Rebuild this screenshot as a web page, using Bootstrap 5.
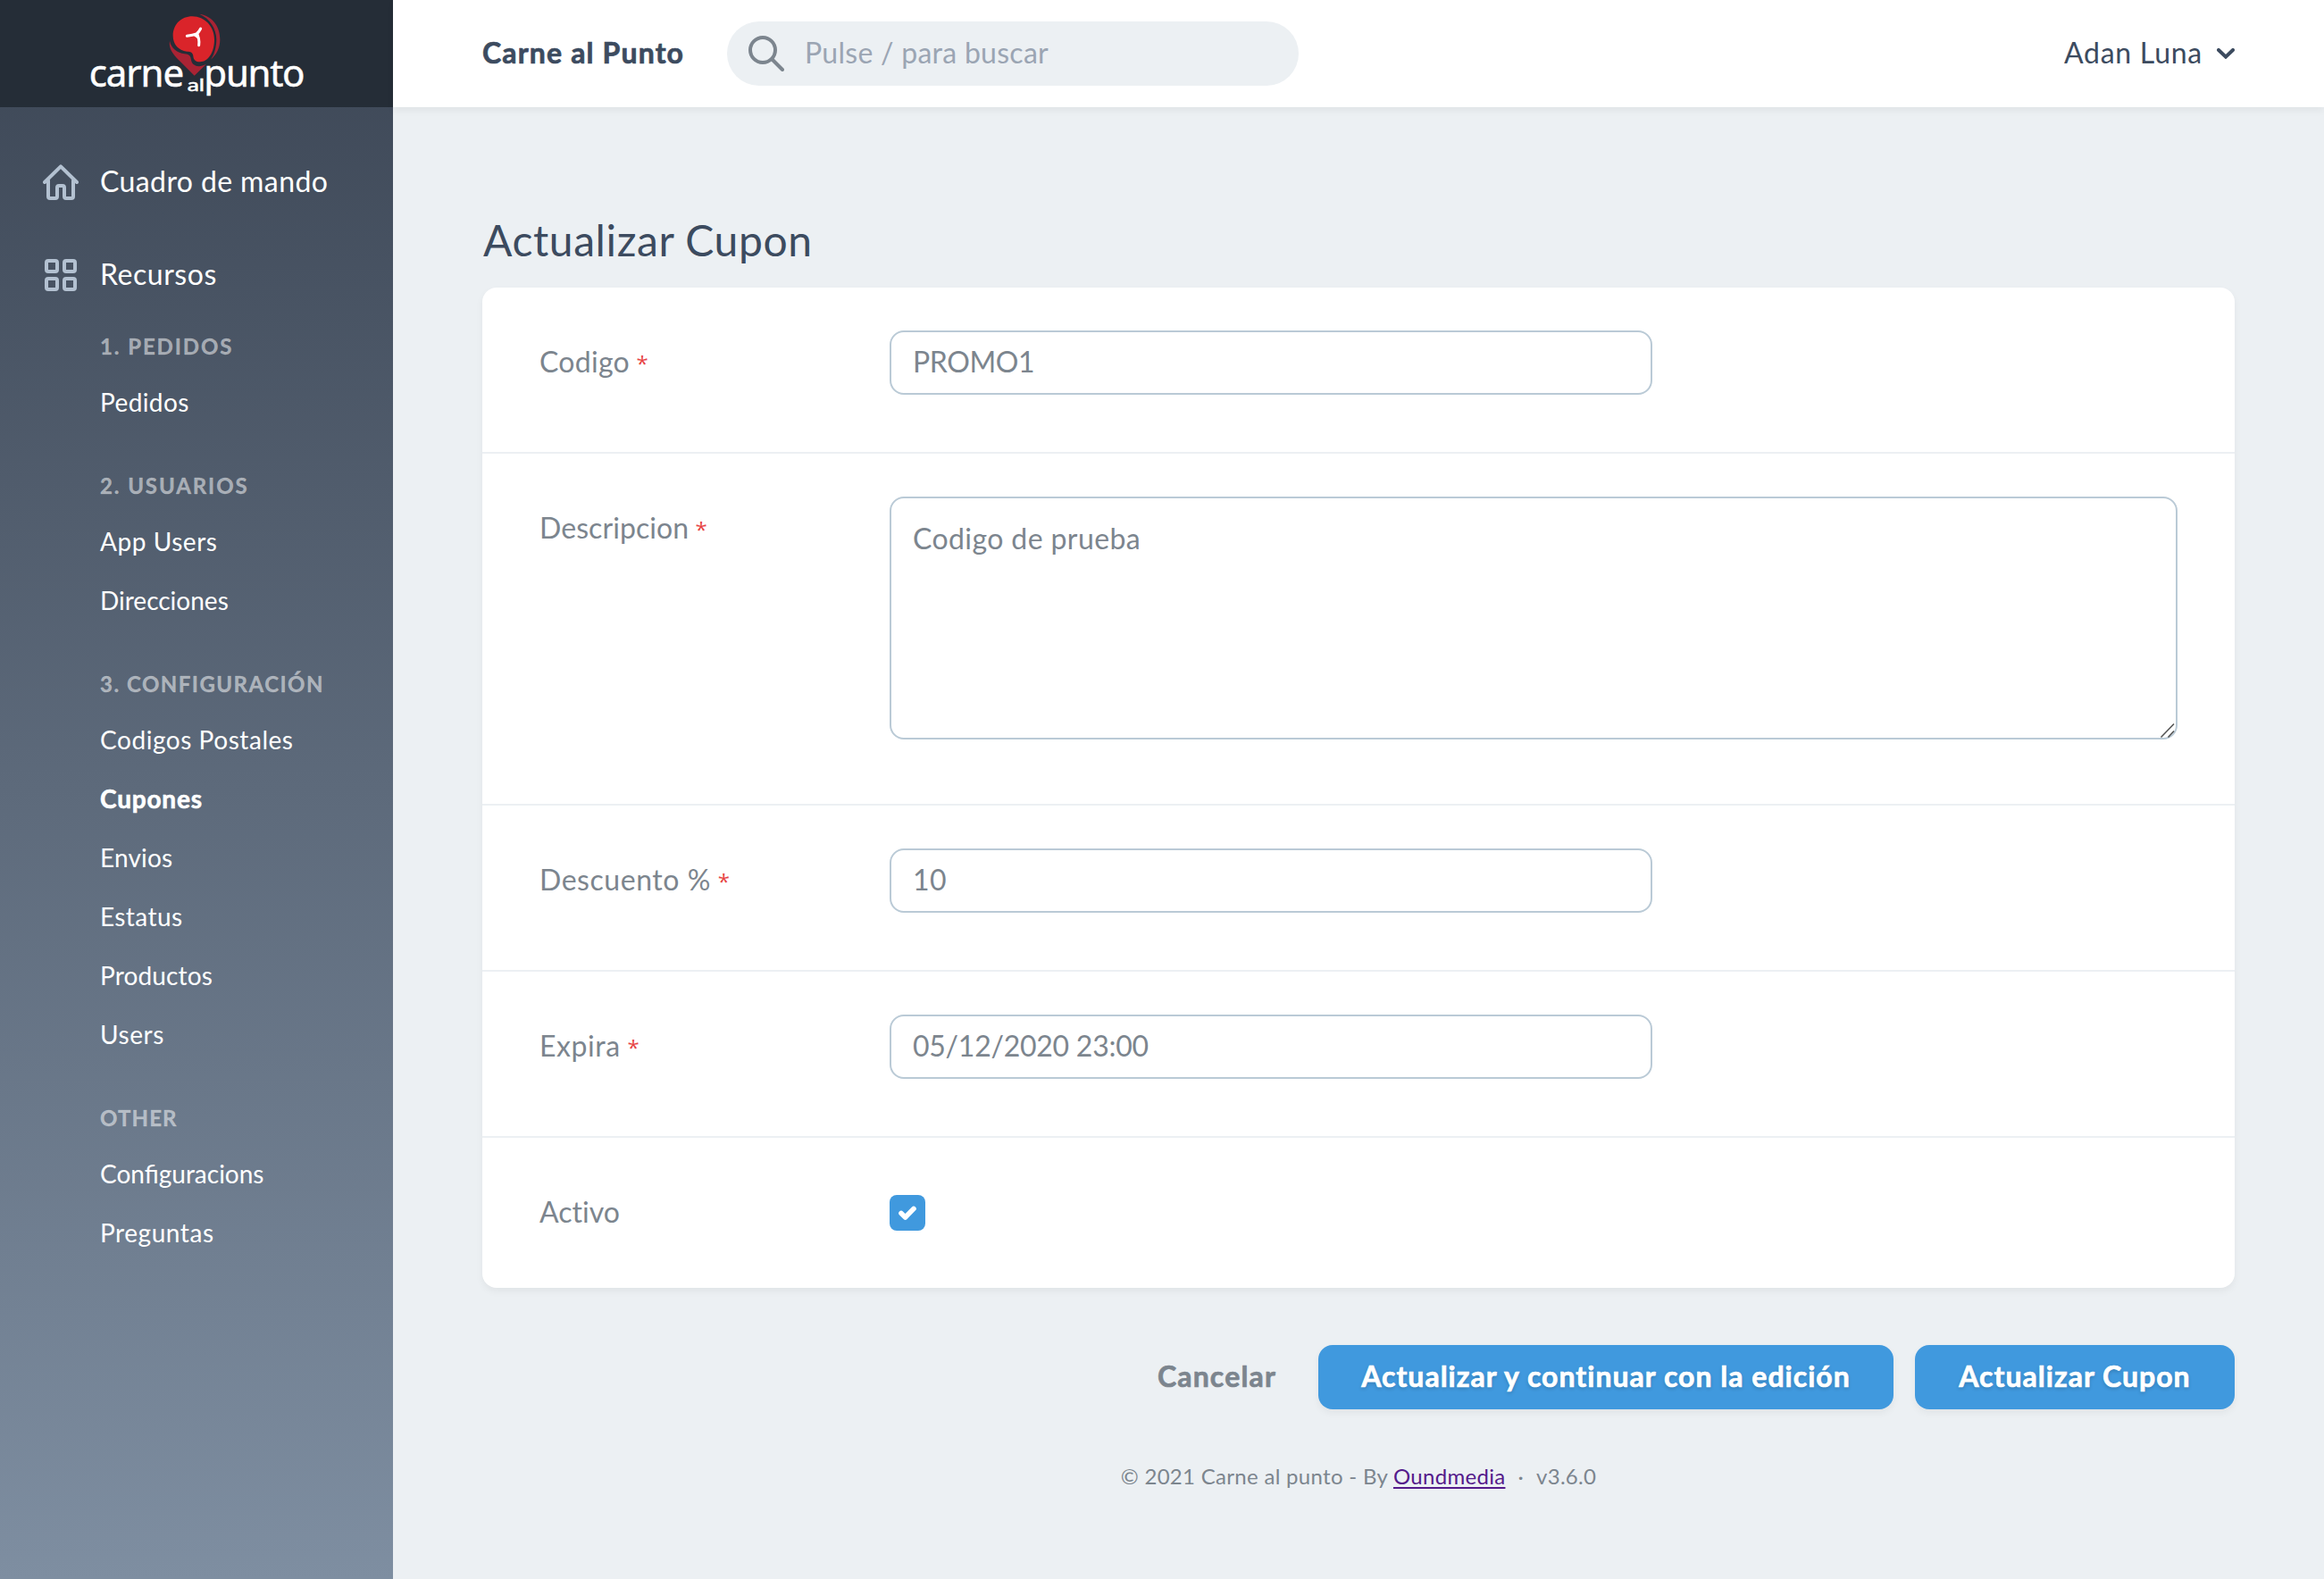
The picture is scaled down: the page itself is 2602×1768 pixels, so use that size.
<!DOCTYPE html>
<html lang="es">
<head>
<meta charset="utf-8">
<meta name="viewport" content="width=device-width, initial-scale=1">
<title>Actualizar Cupon - Carne al Punto</title>
<link href="https://cdn.jsdelivr.net/npm/bootstrap@5.3.0/dist/css/bootstrap.min.css" rel="stylesheet">
<style>
  body { font-family: Lato, "Open Sans", sans-serif; font-size: 32px; line-height: 48px; letter-spacing: .4px; color: #7c858e; background: #ecf0f3; }
  .side { width: 440px; min-height: 1768px; background: linear-gradient(0deg, #7e8ea1, #3c4655); color: #fff; }
  .brand { height: 120px; background: #252d37; }
  .side-menu { padding: 60px 0 0 48px; }
  .side-main { height: 48px; margin-bottom: 56px; gap: 24px; }
  .side-main svg { width: 40px; height: 40px; flex: none; }
  .side-main span { margin-top: -3px; }
  .side-sub { padding-left: 64px; margin-top: -18.4px; }
  .side-sub h2 { font-size: 24px; line-height: 36px; font-weight: 700; letter-spacing: 1.9px; color: rgba(255,255,255,.5); -webkit-text-stroke: .4px rgba(255,255,255,.35); margin: 0 0 11.5px; }
  .side-sub ul { margin: 0 0 42.5px; font-size: 28px; line-height: 66px; }
  .side-sub a, .side-main { color: #fff; text-decoration: none; }
  .side-sub .active { font-weight: 700; letter-spacing: .8px; -webkit-text-stroke: .6px #fff; }
  .ls-0 { letter-spacing: 0; } .ls-1 { letter-spacing: .15px; } .ls-2 { letter-spacing: .08px; } .ls-3 { letter-spacing: .28px; } .ls-6 { letter-spacing: .55px; } .ls-8 { letter-spacing: .75px; }
  .no-liga { font-variant-ligatures: none; }
  .side-sub h2.ls-conf { letter-spacing: 1.48px; } .side-sub h2.ls-other { letter-spacing: 1.15px; }
  .topbar { height: 120px; background: #fff; padding: 0 100px; box-shadow: 0 4px 8px rgba(0,0,0,.05); color: #3c4b5f; }
  .topbar .label-up { padding-bottom: 2.5px; }
  .topbar strong { letter-spacing: 1.15px; width: 274px; font-weight: 700; -webkit-text-stroke: .7px #3c4b5f; }
  .search { width: 640px; height: 72px; border-radius: 36px; background: #ecf0f3; padding-left: 24px; gap: 23px; }
  .search svg { width: 40px; height: 40px; flex: none; }
  .search input { flex: 1; min-width: 0; border: 0; outline: 0; background: none; padding: 0 0 2.5px; letter-spacing: .27px; }
  .search input::placeholder { color: #9ba5b3; opacity: 1; }
  .content { padding: 119px 100px 0; }
  .content h1 { font-size: 48px; line-height: 60px; font-weight: 400; letter-spacing: .6px; color: #3c4b5f; margin: 0 0 26px; padding: 0 0 0 1px; height: 57px; }
  .panel { background: #fff; border-radius: 16px; box-shadow: 0 4px 8px rgba(0,0,0,.05); }
  .field { border-bottom: 2px solid #ecf0f3; height: 186px; }
  .field-tall { height: 394px; }
  .field:last-child { border: 0; height: 168px; }
  .field > label { width: 456px; padding: 58.6px 0 0 64px; flex: none; }
  .req { color: #e74444; font-family: "Open Sans", sans-serif; font-size: 24px; line-height: 1; margin-left: -1px; position: relative; top: -1px; letter-spacing: 0; }
  .field .form-control { width: 854px; height: 72px; margin-top: 48px; border: 2px solid #bacad6; border-radius: 16px; padding: 0 24px 2.5px; font-size: 32px; line-height: 48px; color: #7c858e; letter-spacing: .4px; background: #fff; }
  .field .form-control.code-value { letter-spacing: -.4px; }
  .field .form-control.date-value { letter-spacing: -.25px; }
  .area-box { margin-top: 48px; width: 1442px; height: 272px; }
  .field textarea.form-control { width: 100%; height: 272px; margin: 0; padding: 20.5px 24px; resize: none; display: block; }
  .grip { position: absolute; right: 0; bottom: 0; width: 24px; height: 24px; }
  .tick { width: 40px; height: 40px; margin-top: 64px; border-radius: 8px; background: #4099de; }
  .tick svg { display: block; width: 40px; height: 40px; }
  .actions { margin-top: 64px; gap: 24px; font-weight: 700; }
  .actions a { color: #7c858e; text-decoration: none; margin-right: 23px; padding-bottom: 3px; letter-spacing: 1.16px; -webkit-text-stroke: .7px #7c858e; }
  .actions .btn { height: 72px; border: 0; border-radius: 16px; background: #4099de; color: #fff; font-size: 32px; font-weight: 700; line-height: 48px; letter-spacing: 1.02px; padding: 0 0 3px; box-shadow: 0 4px 8px rgba(0,0,0,.05); text-shadow: 0 2px 4px rgba(0,0,0,.2); -webkit-text-stroke: .7px #fff; }
  .btn-more { width: 644px; } .btn-save { width: 358px; }
  .foot { margin-top: 57.2px; font-size: 24px; line-height: 36px; white-space: pre; letter-spacing: .3px; }
  .foot a { color: #551a8b; text-decoration-thickness: 2px; text-underline-offset: 3px; }
  .foot span { padding: 0 14px; }
</style>
</head>
<body>
<div class="d-flex">
  <aside class="side flex-shrink-0">
    <div class="brand">
      <svg class="d-block" width="440" height="120" viewBox="0 0 440 120" role="img" aria-label="carne al punto">
        <g transform="translate(90 10) scale(.33333)">
          <path fill="#a92334" d="M400 17C445 24 469 60 469 102C469 130 458 153 438 170C451 152 457 126 457 102C456 65 435 32 400 17Z"/>
          <path fill="#a92334" d="M300 107C304 131 326 148 350 151C369 153 370 160 372 172C376 194 400 198 423 185L383 224L332 173C309 150 296 132 300 107Z"/>
          <path fill="#da242a" d="M376 25C418 25 450 60 450 103C450 145 430 178 402 178C386 178 380 170 379 158C378 147 370 143 358 143C329 140 311 118 311 90C311 52 339 25 376 25Z"/>
          <path fill="none" stroke="#fff" stroke-width="9" stroke-linecap="round" stroke-linejoin="round" d="M358 91Q378 88 390 84Q398 78 404 66M390 84Q401 98 398 122"/>
          <path fill="#fff" d="M376 87L396 77L401 104Z"/>
          <g fill="#fff" stroke="#fff" stroke-width="1.5" font-family="'Noto Sans', sans-serif" font-size="126">
            <text x="29" y="261" textLength="320">carne</text>
            <text x="415" y="261" textLength="340">punto</text>
            <text x="359" y="277" font-family="Lato, sans-serif" font-size="60" textLength="58" lengthAdjust="spacingAndGlyphs" style="letter-spacing:0">al</text>
          </g>
        </g>
      </svg>
    </div>
    <nav class="side-menu">
      <a class="side-main d-flex align-items-center" href="#">
        <svg viewBox="0 0 40 40" fill="none" stroke="#b3c1d1" stroke-width="4" stroke-linecap="round" stroke-linejoin="round"><path d="M2 20L20 2.4L38 20"/><path d="M6 18V36a2 2 0 0 0 2 2h6a2 2 0 0 0 2-2V26a2 2 0 0 1 2-2h4a2 2 0 0 1 2 2V36a2 2 0 0 0 2 2h6a2 2 0 0 0 2-2V18"/></svg>
        <span>Cuadro de mando</span>
      </a>
      <a class="side-main d-flex align-items-center" href="#">
        <svg viewBox="0 0 40 40" fill="none" stroke="#b3c1d1" stroke-width="4"><rect x="4" y="4" width="12" height="12" rx="2"/><rect x="24" y="4" width="12" height="12" rx="2"/><rect x="4" y="24" width="12" height="12" rx="2"/><rect x="24" y="24" width="12" height="12" rx="2"/></svg>
        <span class="ls-6">Recursos</span>
      </a>
      <div class="side-sub">
        <h2>1. PEDIDOS</h2>
        <ul class="list-unstyled"><li><a href="#">Pedidos</a></li></ul>
        <h2>2. USUARIOS</h2>
        <ul class="list-unstyled"><li><a class="ls-6" href="#">App Users</a></li><li><a class="ls-0" href="#">Direcciones</a></li></ul>
        <h2 class="ls-conf">3. CONFIGURACIÓN</h2>
        <ul class="list-unstyled">
          <li><a class="ls-6" href="#">Codigos Postales</a></li>
          <li><a class="active" href="#">Cupones</a></li>
          <li><a class="ls-1" href="#">Envios</a></li>
          <li><a href="#">Estatus</a></li>
          <li><a class="ls-1" href="#">Productos</a></li>
          <li><a class="ls-6" href="#">Users</a></li>
        </ul>
        <h2 class="ls-other">OTHER</h2>
        <ul class="list-unstyled"><li><a class="ls-0" href="#">Configuracions</a></li><li><a class="ls-6" href="#">Preguntas</a></li></ul>
      </div>
    </nav>
  </aside>
  <div class="flex-grow-1">
    <header class="topbar d-flex align-items-center">
      <strong class="label-up">Carne al Punto</strong>
      <div class="search d-flex align-items-center">
        <svg viewBox="0 0 40 40" fill="none" stroke="#7c858e" stroke-width="4" stroke-linecap="round"><circle cx="16" cy="16" r="14"/><path d="M26.5 26.5L38 38"/></svg>
        <input type="text" placeholder="Pulse / para buscar" aria-label="Buscar">
      </div>
      <div class="ms-auto d-flex align-items-center">
        <span class="label-up ls-8">Adan Luna</span>
        <svg class="ms-3" width="20" height="12" viewBox="0 0 20 12" fill="none" stroke="#3c4b5f" stroke-width="4" stroke-linecap="round" stroke-linejoin="miter"><path d="M2 2L10 9.6L18 2"/></svg>
      </div>
    </header>
    <main class="content">
      <h1>Actualizar Cupon</h1>
      <form class="panel">
        <div class="field d-flex"><label class="ls-3" for="codigo">Codigo <span class="req">*</span></label><input id="codigo" class="form-control code-value" value="PROMO1"></div>
        <div class="field field-tall d-flex"><label class="ls-2" for="desc">Descripcion <span class="req">*</span></label>
          <div class="area-box position-relative">
            <textarea id="desc" class="form-control">Codigo de prueba</textarea>
            <svg class="grip" viewBox="0 0 24 24" stroke="#555" stroke-width="1.6"><path d="M5.5 21.5L20 6.5M13.5 21.5L20 14.5"/></svg>
          </div>
        </div>
        <div class="field d-flex"><label class="ls-6" for="dto">Descuento % <span class="req">*</span></label><input id="dto" class="form-control" value="10"></div>
        <div class="field d-flex"><label class="ls-6" for="exp">Expira <span class="req">*</span></label><input id="exp" class="form-control date-value" value="05/12/2020 23:00"></div>
        <div class="field d-flex"><label class="ls-0 no-liga">Activo</label>
          <div class="tick" role="checkbox" aria-checked="true" aria-label="Activo"><svg viewBox="0 0 40 40" fill="none" stroke="#fff" stroke-width="5.6" stroke-linecap="round" stroke-linejoin="round"><path d="M13 20.5L17.6 25L27 15.4"/></svg></div>
        </div>
      </form>
      <div class="actions d-flex justify-content-end align-items-center">
        <a href="#">Cancelar</a>
        <button class="btn btn-more" type="button">Actualizar y continuar con la edición</button>
        <button class="btn btn-save" type="button">Actualizar Cupon</button>
      </div>
      <footer class="foot text-center">© 2021 Carne al punto - By <a href="#">Oundmedia</a><span>·</span>v3.6.0</footer>
    </main>
  </div>
</div>
<script src="https://cdn.jsdelivr.net/npm/bootstrap@5.3.0/dist/js/bootstrap.bundle.min.js"></script>
</body>
</html>
